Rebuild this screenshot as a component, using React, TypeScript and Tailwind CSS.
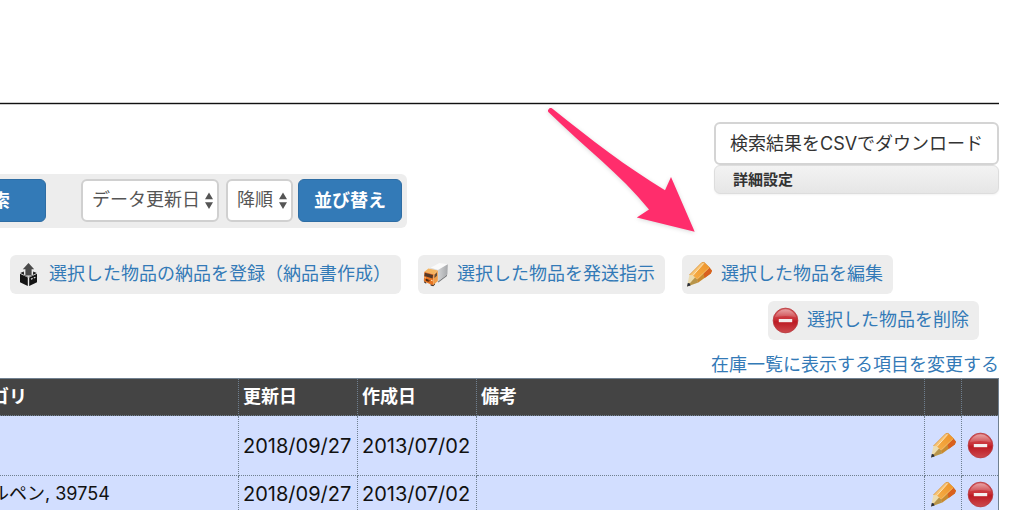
import React, { useState } from "react";

interface Item {
  id: number;
  category: string;
  updatedAt: string;
  createdAt: string;
  note: string;
  rowClass: string;
}

const items: Item[] = [
  {
    id: 1,
    category: "",
    updatedAt: "2018/09/27",
    createdAt: "2013/07/02",
    note: "",
    rowClass: "h-[60px]",
  },
  {
    id: 2,
    category: "ボールペン, 39754",
    updatedAt: "2018/09/27",
    createdAt: "2013/07/02",
    note: "",
    rowClass: "h-[37px]",
  },
];

const PencilIcon = () => (
  <svg width="27" height="27" viewBox="0 0 27 27" aria-hidden="true">
    <defs>
      <linearGradient id="pencilBody" x1="0" y1="1" x2="1" y2="0">
        <stop offset="0" stopColor="#f5ae48" />
        <stop offset="1" stopColor="#ee9227" />
      </linearGradient>
    </defs>
    <path d="M1 25.6 3.4 14 7.6 14.4 11.4 18.2 11.6 21.8Z" fill="#ecdcb0" />
    <path d="M1 25.6 9 16.4 11.4 18.4 11.6 21.8Z" fill="#b8954a" />
    <path d="M3.4 14 15.8 1.6 18.4 1.4 7.4 14.6Z" fill="#f8c474" />
    <path d="M7 14.4 18.2 1.4 23.8 6.8 11.2 18.6Z" fill="url(#pencilBody)" />
    <path d="M11 18.4 23.6 6.6 26 9.8 24.8 12.6 11.6 22Z" fill="#c98a2e" />
    <path d="M17.6 12.4 23.6 6.8 26 9.8 24.8 12.6 18.6 17Z" fill="#d9601f" />
    <path d="M3.4 14 15.8 1.6 18.2 1.4 23.8 6.8" fill="none" stroke="#dc9437" strokeWidth="0.8" />
    <path d="M7 14.4 17.8 2.4" stroke="#fde8bf" strokeWidth="0.9" />
    <path d="M11.4 17.8 22.8 7" stroke="#f9cb85" strokeWidth="0.6" />
    <path d="M1 25.6 1.8 22 3.6 22.2 4.6 24.4Z" fill="#2a2f3a" />
  </svg>
);

const MinusIcon = () => (
  <svg width="27" height="27" viewBox="0 0 27 27" aria-hidden="true">
    <defs>
      <linearGradient id="minusBody" x1="0" y1="0" x2="0" y2="1">
        <stop offset="0" stopColor="#d4585a" />
        <stop offset="0.45" stopColor="#c93138" />
        <stop offset="0.55" stopColor="#bd1a23" />
        <stop offset="1" stopColor="#cc4a4e" />
      </linearGradient>
      <linearGradient id="minusGloss" x1="0" y1="0" x2="0" y2="1">
        <stop offset="0" stopColor="#fff" stopOpacity="0.45" />
        <stop offset="1" stopColor="#fff" stopOpacity="0.1" />
      </linearGradient>
    </defs>
    <circle cx="13.5" cy="13.5" r="12.4" fill="url(#minusBody)" stroke="#b5393d" strokeWidth="0.7" />
    <path d="M2.4 10.6A11.6 11.6 0 0 1 24.6 10.6Q13.5 7.6 2.4 10.6Z" fill="url(#minusGloss)" />
    <rect x="6.8" y="12" width="13.4" height="3.2" fill="#f4eeee" />
  </svg>
);

const TruckIcon = () => (
  <svg width="27" height="27" viewBox="0 0 27 27" aria-hidden="true">
    <defs>
      <linearGradient id="trailerSide" x1="0" y1="0" x2="1" y2="0">
        <stop offset="0" stopColor="#d2d3d5" />
        <stop offset="1" stopColor="#a6a8ab" />
      </linearGradient>
    </defs>
    <path d="M15.6 20.4 25 13.6V15L16.4 21.6Z" fill="#77787a" />
    <path d="M8.6 6.8 17.4 2 25.8 3.2 16 9Z" fill="#fafafa" />
    <path d="M8.6 6.8 16 9V11.6L7.2 9Z" fill="#dcdcdc" />
    <path d="M16 9 25.8 3.2 25.4 13.6 16 20.6Z" fill="url(#trailerSide)" />
    <path d="M2.4 10.8 6.4 7.6 15.8 9.4 11.8 13.2Z" fill="#f5b45f" />
    <path d="M2.4 10.8 11.8 13.2 11 24.4 1.8 20.2Z" fill="#e87422" />
    <path d="M11.8 13.2 15.8 9.4V20L11 24.4Z" fill="#f29d47" />
    <path d="M2.8 11.8 11 14 10.6 17.4 2.4 15Z" fill="#54392a" />
    <path d="M12.6 13.8 15 11.4V14.8L12.4 17Z" fill="#63503f" />
    <path d="M3.6 17.6 8.6 19.4 6 19.8 8.4 21.4 3.8 19.8Z" fill="#4c2812" />
    <path d="M2 20.2 4.2 21.4V22.8L2.2 21.6ZM8.6 23.2 11 24.2 13 22.4V23.6L11.2 25.2 8.6 24.4Z" fill="#3c2b20" />
    <path d="M2.6 16.6 3.8 17M9 19.2 10.6 19.8" stroke="#ffe3b0" strokeWidth="1" />
  </svg>
);

const DeliveryIcon = () => (
  <svg width="27" height="27" viewBox="0 0 27 27" aria-hidden="true">
    <path d="M14.5 2 20.2 8.2H17.6V14.4H11.4V8.2H8.8Z" fill="#4a4a4a" />
    <path d="M6.2 12 9.8 10.4 10.2 14.6 14.5 16.2 18.8 14.6 19.2 10.4 22.8 12 14.5 16Z" fill="#222" />
    <path d="M6 12.8 13.8 16.6V25L6 21.2Z" fill="#151515" />
    <path d="M15.2 16.6 23 12.8V21.2L15.2 25Z" fill="#151515" />
    <path d="M17 18.2 18.6 17.4M19.8 17 21.4 16.2" stroke="#e5e5e5" strokeWidth="1.2" />
  </svg>
);

const SelectArrows = () => (
  <svg
    className="pointer-events-none absolute top-3 right-1"
    width="10"
    height="20"
    viewBox="0 0 10 20"
    aria-hidden="true"
  >
    <path d="M4 1.6 8 8.2H0ZM4 18 8 11.2H0Z" fill="#555" />
  </svg>
);

interface ActionLinkProps {
  icon: React.ReactNode;
  label: string;
}

const ActionLink: React.FC<ActionLinkProps> = ({ icon, label }) => (
  <a
    href="#"
    className="flex h-[39px] items-center gap-2 rounded-md bg-[#ededed] pr-2.5 pl-1 whitespace-nowrap text-[#337ab7]"
  >
    {icon}
    <span className="pb-0.5">{label}</span>
  </a>
);

const App: React.FC = () => {
  const [sortKey, setSortKey] = useState("updated");
  const [order, setOrder] = useState("desc");

  const selectClass =
    "h-[43px] w-full appearance-none rounded-md border-2 border-[#d0d0d0] bg-white pb-0.5 pl-[9px] text-[#555]";

  return (
    <div className="relative h-screen overflow-hidden bg-white font-['Inter','Noto_Sans_CJK_JP',sans-serif] text-lg leading-[26px] text-[#111]">
      <div className="mr-[25px] -ml-[50px] pt-[102px]">
        <div className="h-[3px] border-y border-[#ccc] bg-[#111]" />

        <div className="mt-[17px] flex items-start justify-between">
          <form
            className="-ml-3 mt-[52px] flex items-center rounded-md bg-[#ededed] pt-[5px] pr-[5px] pb-1.5"
            onSubmit={(e) => e.preventDefault()}
          >
            <button
              type="submit"
              className="h-[43px] rounded-md border border-[#2e6da4] bg-[#337ab7] px-[35px] font-bold whitespace-nowrap text-white"
            >
              検索
            </button>
            <div className="relative ml-[35px] w-[138px]">
              <select
                aria-label="並び替え項目"
                className={selectClass}
                value={sortKey}
                onChange={(e) => setSortKey(e.target.value)}
              >
                <option value="updated">データ更新日</option>
              </select>
              <SelectArrows />
            </div>
            <div className="relative ml-[7px] w-[67px]">
              <select
                aria-label="並び順"
                className={selectClass}
                value={order}
                onChange={(e) => setOrder(e.target.value)}
              >
                <option value="desc">降順</option>
              </select>
              <SelectArrows />
            </div>
            <button
              type="button"
              className="ml-[5px] h-[43px] rounded-md border border-[#2e6da4] bg-[#337ab7] px-[15px] font-bold whitespace-nowrap text-white"
            >
              並び替え
            </button>
          </form>

          <div className="flex w-[285px] flex-col">
            <button
              type="button"
              className="h-[43px] rounded-md border-2 border-[#d4d4d4] bg-white pl-3.5 text-left whitespace-nowrap text-[#333]"
            >
              検索結果をCSVでダウンロード
            </button>
            <button
              type="button"
              className="h-[29px] rounded-md border border-[#ddd] bg-linear-to-b from-[#f3f3f3] to-[#e6e6e6] pl-[18px] text-left text-[15px] font-bold text-[#333] shadow-xs"
            >
              詳細設定
            </button>
          </div>
        </div>

        <div className="mt-[27px] flex flex-col items-end gap-[7px]">
          <div className="mr-[106px] flex gap-[17px]">
            <ActionLink icon={<DeliveryIcon />} label="選択した物品の納品を登録（納品書作成）" />
            <ActionLink icon={<TruckIcon />} label="選択した物品を発送指示" />
            <ActionLink icon={<PencilIcon />} label="選択した物品を編集" />
          </div>
          <div className="mr-5">
            <ActionLink icon={<MinusIcon />} label="選択した物品を削除" />
          </div>
        </div>

        <div className="mt-3 text-right">
          <a href="#" className="block text-[#337ab7]">
            在庫一覧に表示する項目を変更する
          </a>
        </div>

        <table className="w-full table-fixed border-collapse border border-[#708090] bg-[#d2deff] [&_td]:border [&_td]:border-dotted [&_td]:border-[#708090] [&_th]:border [&_th]:border-dotted [&_th]:border-[#708090]">
          <colgroup>
            <col className="w-[288px]" />
            <col className="w-[119px]" />
            <col className="w-[119px]" />
            <col />
            <col className="w-[37px]" />
            <col className="w-[37px]" />
          </colgroup>
          <thead>
            <tr className="h-[37px] bg-[#444] text-left text-white">
              <th className="px-1">カテゴリ</th>
              <th className="px-1">更新日</th>
              <th className="px-1">作成日</th>
              <th className="px-1">備考</th>
              <th aria-label="編集" />
              <th aria-label="削除" />
            </tr>
          </thead>
          <tbody>
            {items.map((item) => (
              <tr key={item.id} className={item.rowClass}>
                <td className="px-1">{item.category}</td>
                <td className="px-1 text-xl leading-[26px]">{item.updatedAt}</td>
                <td className="px-1 text-xl leading-[26px]">{item.createdAt}</td>
                <td className="px-1">{item.note}</td>
                <td>
                  <a href="#" aria-label="編集" className="flex justify-center">
                    <PencilIcon />
                  </a>
                </td>
                <td>
                  <a href="#" aria-label="削除" className="flex justify-center">
                    <MinusIcon />
                  </a>
                </td>
              </tr>
            ))}
          </tbody>
        </table>
      </div>

      <svg
        className="pointer-events-none absolute top-[90px] right-[314px] drop-shadow-sm"
        width="180"
        height="160"
        viewBox="0 0 180 160"
        aria-hidden="true"
      >
        <path
          d="M22.5 18.8C60 49 98 78 135 100.3L141 87 164.7 141.7 106.8 127.6 119 119.4C90 84 54 57 18.9 22.6A2.6 2.6 0 0 1 22.5 18.8Z"
          fill="#ff2d6c"
        />
      </svg>
    </div>
  );
};

export default App;
